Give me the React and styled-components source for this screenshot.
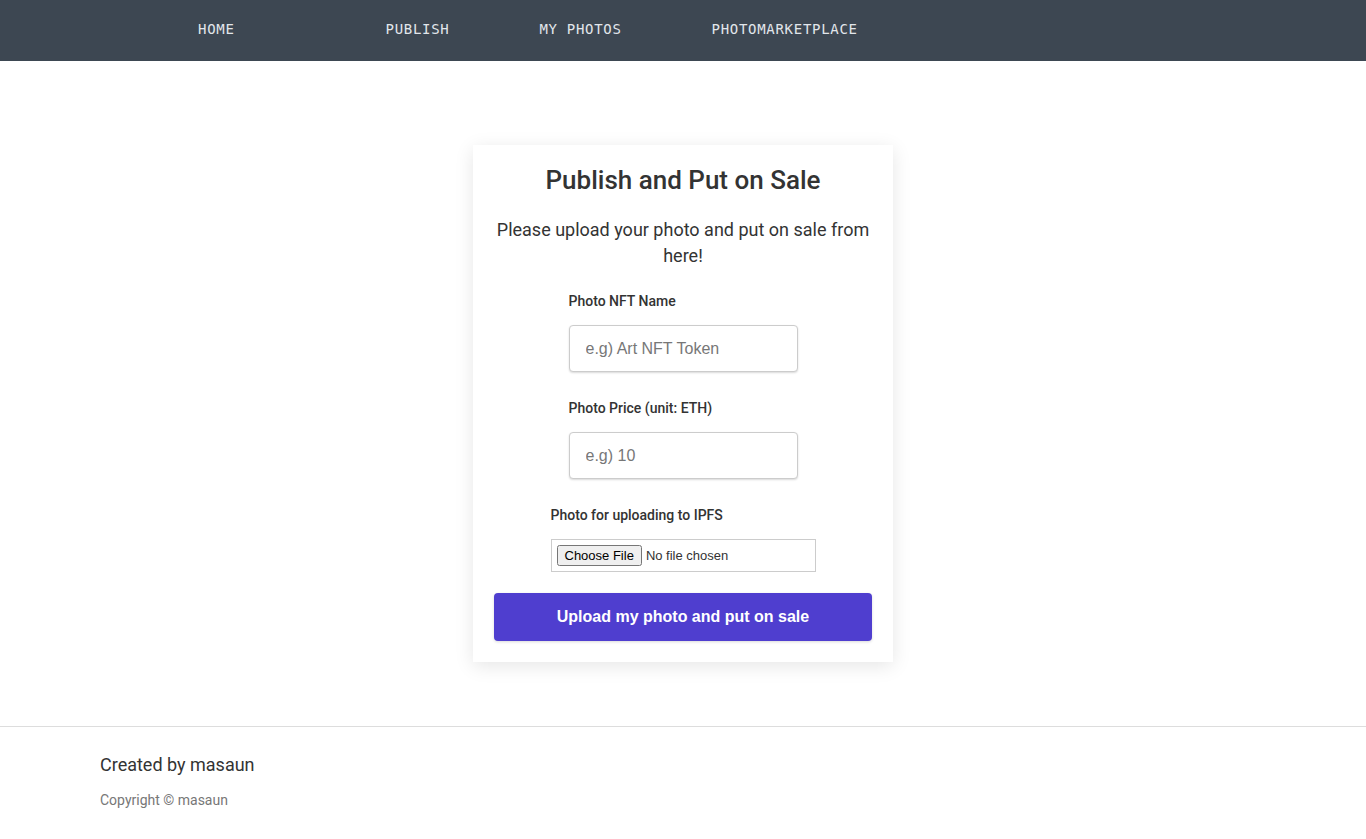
import React from 'react';
import styled, { createGlobalStyle } from 'styled-components';

const GlobalStyle = createGlobalStyle`
  html, body {
    margin: 0;
    padding: 0;
    background: #fff;
    font-family: Roboto, "Liberation Sans", Arial, sans-serif;
    color: #333;
  }
  * { box-sizing: border-box; }
`;

const NavBar = styled.nav`
  height: 61px;
  background: #3d4752;
  display: flex;
  align-items: center;
  padding: 0 0 4px 198px;
`;

const NavItem = styled.a`
  font-family: "DejaVu Sans Mono", "Liberation Mono", monospace;
  font-size: 14px;
  font-weight: 500;
  letter-spacing: 0.7px;
  color: #e2e6eb;
  text-decoration: none;
  margin-right: ${p => p.gap}px;
  cursor: pointer;
`;

const Main = styled.main`
  display: flex;
  justify-content: center;
  padding: 84px 0 64px;
`;

const Card = styled.section`
  width: 420px;
  background: #fff;
  box-shadow: 0 4px 18px rgba(0, 0, 0, 0.1);
  padding: 21px 21px 21px;
  display: flex;
  flex-direction: column;
  align-items: center;
`;

const Title = styled.h2`
  margin: 0;
  font-size: 26px;
  font-weight: 500;
  line-height: 29px;
  color: #333;
`;

const Lead = styled.p`
  margin: 22px 0 0;
  font-size: 18px;
  line-height: 26px;
  text-align: center;
  color: #333;
`;

const Field = styled.div`
  width: ${p => p.width}px;
  margin-top: ${p => p.top}px;
  display: flex;
  flex-direction: column;
`;

const Label = styled.label`
  font-size: 14px;
  font-weight: 500;
  line-height: 17px;
  color: #333;
  margin-bottom: 15px;
`;

const TextInput = styled.input`
  width: 100%;
  height: 47px;
  border: 1px solid #ccc;
  border-radius: 4px;
  box-shadow: 0 1px 2px rgba(0, 0, 0, 0.15);
  padding: 0 16px;
  font-family: "Liberation Sans", Arial, sans-serif;
  font-size: 16px;
  color: #333;
  outline: none;
  &::placeholder {
    color: #777;
  }
`;

const FileInput = styled.input`
  width: 100%;
  height: 33px;
  border: 1px solid #ccc;
  padding: 5px;
  font-family: "Liberation Sans", Arial, sans-serif;
  font-size: 13px;
  color: #333;
`;

const SubmitButton = styled.button`
  width: 100%;
  height: 48px;
  margin-top: 21px;
  border: none;
  border-radius: 4px;
  background: #4f3ecf;
  color: #fff;
  font-family: "Liberation Sans", Arial, sans-serif;
  font-size: 16px;
  font-weight: 700;
  box-shadow: 0 1px 3px rgba(0, 0, 0, 0.15);
  cursor: pointer;
`;

const Footer = styled.footer`
  border-top: 1px solid #ddd;
  padding: 27px 100px 20px;
`;

const FooterTitle = styled.div`
  font-size: 18px;
  line-height: 22px;
  color: #333;
`;

const Copyright = styled.div`
  margin-top: 16px;
  font-size: 14px;
  line-height: 16px;
  color: #777;
`;

export default function App() {
  return (
    <>
      <GlobalStyle />
      <NavBar>
        <NavItem gap={151}>HOME</NavItem>
        <NavItem gap={90}>PUBLISH</NavItem>
        <NavItem gap={90}>MY PHOTOS</NavItem>
        <NavItem gap={0}>PHOTOMARKETPLACE</NavItem>
      </NavBar>
      <Main>
        <Card>
          <Title>Publish and Put on Sale</Title>
          <Lead>Please upload your photo and put on sale from here!</Lead>
          <Field width={229} top={24}>
            <Label>Photo NFT Name</Label>
            <TextInput type="text" placeholder="e.g) Art NFT Token" />
          </Field>
          <Field width={229} top={28}>
            <Label>Photo Price (unit: ETH)</Label>
            <TextInput type="text" placeholder="e.g) 10" />
          </Field>
          <Field width={265} top={28}>
            <Label>Photo for uploading to IPFS</Label>
            <FileInput type="file" />
          </Field>
          <SubmitButton>Upload my photo and put on sale</SubmitButton>
        </Card>
      </Main>
      <Footer>
        <FooterTitle>Created by masaun</FooterTitle>
        <Copyright>Copyright © masaun</Copyright>
      </Footer>
    </>
  );
}
